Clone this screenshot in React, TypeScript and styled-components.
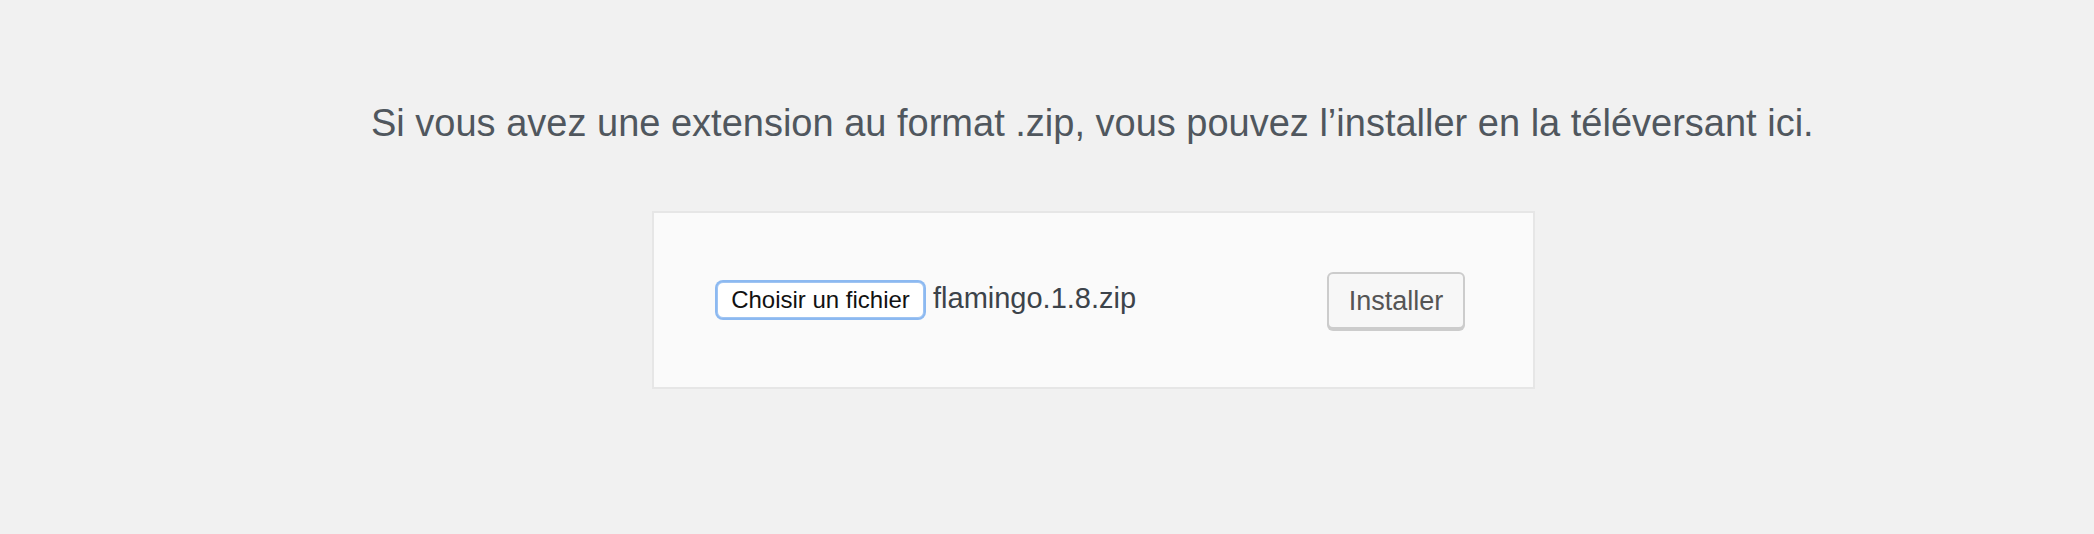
import React from "react";
import styled, { createGlobalStyle } from "styled-components";

const Global = createGlobalStyle`
  html, body { margin: 0; padding: 0; }
  body {
    background: #f1f1f1;
    font-family: "Liberation Sans", Arial, sans-serif;
    width: 2094px;
    height: 534px;
    overflow: hidden;
  }
`;

const Page = styled.div`
  display: flex;
  flex-direction: column;
  align-items: flex-start;
  padding: 104px 0 0 371px;
`;

const Help = styled.p`
  margin: 0;
  font-size: 38px;
  line-height: 38px;
  color: #50575e;
`;

const UploadForm = styled.form`
  margin: 69px 0 0 281px;
  width: 883px;
  height: 178px;
  box-sizing: border-box;
  background: #fafafa;
  border: 2px solid #e6e6e6;
  display: flex;
  align-items: center;
  padding: 0 68px 0 63px;
`;

const FileField = styled.div`
  display: flex;
  align-items: baseline;
  gap: 9px;
  flex: 1;
`;

const ChooseButton = styled.button`
  box-sizing: border-box;
  width: 207px;
  height: 36px;
  padding: 0 0 1px;
  background: #fff;
  border: 1px solid #9fc4f2;
  border-radius: 6px;
  box-shadow: 0 0 0 2px #8cb9f1;
  font-family: "Liberation Sans", Arial, sans-serif;
  font-size: 24px;
  color: #111;
`;

const FileName = styled.span`
  font-size: 29px;
  color: #3c434a;
`;

const SubmitButton = styled.button`
  box-sizing: border-box;
  width: 138px;
  height: 57px;
  padding: 2px 0 0;
  background: #f7f7f7;
  border: 2px solid #cccccc;
  border-radius: 6px;
  box-shadow: 0 2px 0 #cccccc;
  font-family: "Liberation Sans", Arial, sans-serif;
  font-size: 27px;
  color: #555555;
`;

export default function App() {
  return (
    <>
      <Global />
      <Page>
        <Help>
          Si vous avez une extension au format .zip, vous pouvez l’installer en la téléversant ici.
        </Help>
        <UploadForm onSubmit={(e) => e.preventDefault()}>
          <FileField>
            <ChooseButton type="button">Choisir un fichier</ChooseButton>
            <FileName>flamingo.1.8.zip</FileName>
          </FileField>
          <SubmitButton type="submit">Installer</SubmitButton>
        </UploadForm>
      </Page>
    </>
  );
}
